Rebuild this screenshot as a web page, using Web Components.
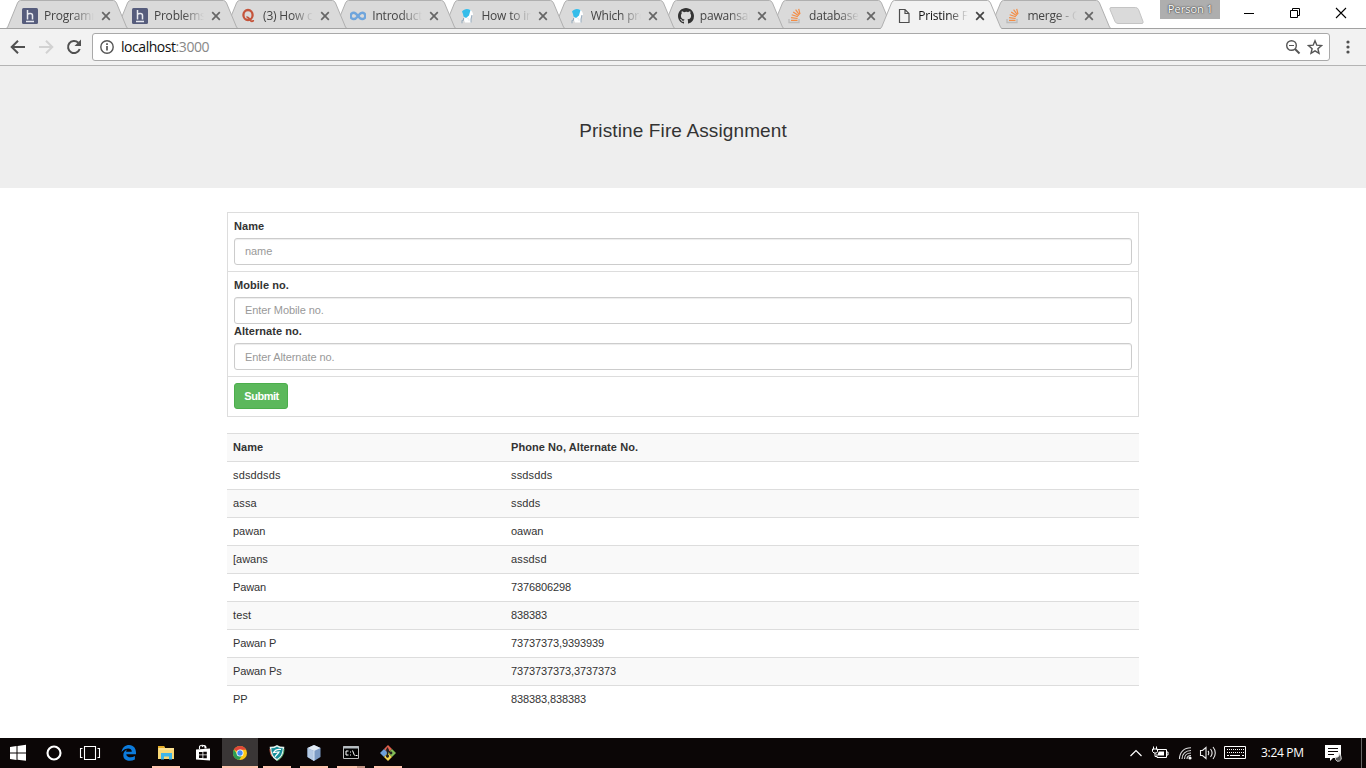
<!DOCTYPE html>
<html lang="en"><head><meta charset="utf-8"><title>Pristine Fire</title>
<style>html,body{margin:0;height:100%;overflow:hidden;background:#fff}</style></head>
<body>
<desktop-screen></desktop-screen>
<script>
const ICONS={
hack:'<svg width="16" height="16"><rect width="16" height="16" rx="1.5" fill="#565c7c"/><path d="M5.500 2v9.500M5.500 6.500c1-1.300 5-1.600 5 1v4M4 13.500h8" fill="none" stroke="#e8e9f0" stroke-width="1.500"/></svg>',
quora:'<svg width="16" height="16"><ellipse cx="7" cy="7" rx="4.600" ry="5" fill="none" stroke="#c5543b" stroke-width="2.300"/><path d="M5.500 9.200c3-1 3.500 4.800 5.500 4.200 1 0 1.300-.7 1.300-1.400" fill="none" stroke="#c5543b" stroke-width="1.800"/></svg>',
inf:'<svg width="16" height="16"><path d="M8 8C6 5.200 4.900 4.700 3.800 4.700a3.100 3.100 0 0 0 0 6.400C5.700 11.100 6.700 9.600 8 8S10.200 4.700 12.200 4.700a3.100 3.100 0 0 1 0 6.400C10.700 11.100 9.700 10.200 8 8" fill="none" stroke="#6fa5dc" stroke-width="2.500"/></svg>',
drop:'<svg width="16" height="16"><path d="M8 1c4 0 6 3 6 6l-2 3v4.500H6L5 12l1-4z" fill="#fff"/><path d="M3 3.500C5 .5 9 .2 11.500 2L10 7.500 7 10 4.500 8.500 4 6z" fill="#35bdea"/><path d="M4.500 10v2.300H3v3M13 7l-1 4v3.500" stroke="#93a9bc" stroke-width="1" fill="none"/><path d="M8 10l2 1v2" stroke="#e6edf2" fill="none"/></svg>',
git:'<svg width="16" height="16" viewBox="0 0 16 16"><path fill="#333" d="M8 0C3.580 0 0 3.580 0 8c0 3.540 2.290 6.530 5.470 7.590.4.070.55-.17.55-.38 0-.19-.01-.82-.01-1.490-2.010.37-2.530-.49-2.690-.94-.09-.23-.48-.94-.82-1.130-.28-.15-.68-.52-.01-.53.63-.01 1.080.58 1.230.82.72 1.210 1.870.87 2.330.66.070-.52.28-.87.51-1.070-1.780-.2-3.640-.89-3.640-3.950 0-.87.31-1.590.82-2.150-.08-.2-.36-1.020.08-2.120 0 0 .67-.21 2.200.82A7.700 7.700 0 0 1 8 3.860c.68 0 1.360.09 2 .27 1.530-1.040 2.200-.82 2.200-.82.44 1.100.16 1.920.08 2.120.51.56.82 1.270.82 2.150 0 3.070-1.870 3.750-3.650 3.950.29.25.54.73.54 1.480 0 1.070-.01 1.930-.01 2.200 0 .21.15.46.55.38A8.010 8.010 0 0 0 16 8c0-4.420-3.580-8-8-8z"/></svg>',
so:'<svg width="16" height="16"><path d="M2 11v3.500h10V11" fill="none" stroke="#bcbbbb" stroke-width="1.300"/><path d="M4 12.300h6.500M4.100 9.700l6.500.8M4.700 6.800l6.200 2M6.200 3.900l5.500 3.800M8.600 1.700l3.800 5.200M11.700.8l1.300 5.300" stroke="#f48d45" stroke-width="1.200"/></svg>',
file:'<svg width="16" height="16"><path d="M3.500 1.500h5.500l4 4v9H3.500zM9 1.500v4h4" fill="none" stroke="#4d4d4d" stroke-width="1.200"/></svg>',
back:'<svg width="18" height="18"><path d="M16 9H3M9 2.700L2.700 9 9 15.300" fill="none" stroke="#505050" stroke-width="2"/></svg>',
fwd:'<svg width="18" height="18"><path d="M2 9h13M9 2.700L15.300 9 9 15.300" fill="none" stroke="#d2d2d2" stroke-width="2"/></svg>',
reload:'<svg width="18" height="18"><path d="M14.700 11A6 6 0 1 1 13.300 4.800" fill="none" stroke="#505050" stroke-width="2"/><path d="M9.500 8H16V1.500z" fill="#505050"/></svg>',
info:'<svg width="16" height="16"><circle cx="8" cy="8" r="6.200" fill="none" stroke="#555" stroke-width="1.400"/><path d="M8 7v4.500M8 4.200v1.700" stroke="#555" stroke-width="1.700"/></svg>',
mag:'<svg width="16" height="16"><circle cx="6.500" cy="6.500" r="4.800" fill="none" stroke="#555" stroke-width="1.400"/><path d="M10 10l4.500 4.500" stroke="#555" stroke-width="2"/><path d="M4 6.500h5" stroke="#555"/></svg>',
star:'<svg width="16" height="16"><path d="M8 1.800l1.800 4.400 4.700.4-3.600 3.100 1.100 4.600L8 11.800l-4 2.500 1.100-4.600-3.600-3.100 4.700-.4z" fill="none" stroke="#555" stroke-width="1.400"/></svg>',
dots:'<svg width="4" height="16"><g fill="#505050"><circle cx="2" cy="3" r="1.600"/><circle cx="2" cy="8" r="1.600"/><circle cx="2" cy="13" r="1.600"/></g></svg>',
min:'<svg width="12" height="12"><path d="M1 6.500h10" stroke="#000"/></svg>',
rest:'<svg width="12" height="12"><path d="M1.500 3.500h7v7h-7zM3.500 3V1.500h7v7H9" fill="none" stroke="#000"/></svg>',
cls:'<svg width="12" height="12"><path d="M1 1l10 10M11 1L1 11" stroke="#000" stroke-width="1.100"/></svg>',
win:'<svg width="18" height="18"><path fill="#fff" d="M1 3l6.500-1v6.500H1zM8.500 1.900L17 .8v7.700H8.500zM1 9.500h6.500V16L1 15zM8.500 9.500H17v7.300l-8.500-1z"/></svg>',
cort:'<svg width="18" height="18"><circle cx="9" cy="9" r="6.500" fill="none" stroke="#fff" stroke-width="2.100"/></svg>',
task:'<svg width="22" height="18"><path d="M5.500 2.500h11v13h-11zM3.500 4.500h-2v9h2M18.500 4.500h2v9h-2" fill="none" stroke="#fff" stroke-width="1.100"/></svg>',
edge:'<svg width="18" height="18"><path fill="#0c7bdc" d="M1.500 8C2.300 3.500 5.300 1 9.200 1c4.500 0 6.800 3.700 6.800 7.700v1.500H6.300c.2 3.500 5.400 3.900 8.600 1.900v3.300C10 18.200 3.300 16.700 3.300 11.200c0-2.800 1.500-4.800 3.800-5.800-.6.700-.9 1.300-1 2.300h5.700C11.800 3.600 5.500 3.300 1.500 8z"/></svg>',
folder:'<svg width="18" height="18"><path d="M1 2h6l1 2h9v11H1z" fill="#f8d775"/><path d="M1 2h6l1 2H1z" fill="#e6ad29"/><path d="M2 5h15" stroke="#ffebae"/><path d="M4 15.500V9h11v6.500h-3V12.500H7v3z" fill="#3fb5e8"/></svg>',
store:'<svg width="18" height="18"><path d="M2 5.500l14-1v12l-14-1z" fill="#fff"/><path d="M5.500 5V3c0-2 5.500-2.500 5.500 0v1.500M8 3c1-2 4-2 4 .5v1" fill="none" stroke="#fff" stroke-width="1.100"/><path d="M5 8h3.500v2.500H5zM9.300 7.700h3.500v2.800H9.300zM5 11.300h3.500V14H5zM9.300 11.300h3.500v3H9.300z" fill="#0a0606"/></svg>',
chrome:'<svg width="18" height="18"><circle cx="9" cy="9" r="7" fill="#fbc716"/><path d="M9 9L2.900 5.500A7 7 0 0 1 15.200 5.700H9z" fill="#df463a"/><path d="M2.900 5.500a7 7 0 0 0 5.300 10.500L11.300 11 9 9 6 10z" fill="#2c9c55"/><circle cx="9" cy="9" r="3.500" fill="#fff"/><circle cx="9" cy="9" r="2.700" fill="#438cf4"/></svg>',
shield:'<svg width="18" height="18"><path d="M2.500 3.500C6 3.500 8 2.500 9 1.800c1 .7 3 1.700 6.500 1.700 0 6.500-2 10-6.500 12.500-4.500-2.500-6.500-6-6.500-12.500z" fill="#168f9a" stroke="#e4f2ee" stroke-width="1.500"/><path d="M16 5c0 5-2 9-7 11.700" stroke="#4aa564" fill="none"/><path d="M2 5c0 3 .7 5.500 2 7.500" stroke="#cc5b46" fill="none"/><path d="M13 5.500C9 5 7 6 5.500 8.500L11 8C10 10 8 11 7 13" fill="none" stroke="#fff" stroke-width="1.200"/></svg>',
cube:'<svg width="18" height="18"><path d="M9 1l6.500 3v9L9 17l-6.500-4V4z" fill="#7c9bc5"/><path d="M9 1l6.500 3L9 7 2.500 4z" fill="#e3ebf5"/><path d="M2.500 4L9 7v10l-6.500-4z" fill="#b4c9e4"/><path d="M9 7v9.500" stroke="#d6e4f4"/></svg>',
cmd:'<svg width="18" height="18"><path d="M1.500 2.500h15v12h-15z" fill="#000" stroke="#bbb"/><path d="M1 3.500h16" stroke="#b5bdc2" stroke-width="2"/><path d="M6.500 7H4v4h2.500M8.500 7.500v1M8.500 10.500v1M10.500 6.500l2 5M13.500 11.500h2" fill="none" stroke="#fff"/></svg>',
gitb:'<svg width="18" height="18"><path d="M9 1l4 4-4 4-4-4z" fill="#e2604d"/><path d="M5 5l4 4-4 4-4-4z" fill="#6ea1dc"/><path d="M13 5l4 4-4 4-4-4z" fill="#83bd56"/><path d="M9 9l4 4-4 4-4-4z" fill="#f4d551"/><path d="M8.500 3.500v10M8.500 6l3 3" stroke="#222" stroke-width="1.300"/><circle cx="8.500" cy="6" r="1.400" fill="#222"/><circle cx="12" cy="9" r="1.400" fill="#222"/><circle cx="8.500" cy="12" r="1.600" fill="#222"/></svg>',
up:'<svg width="14" height="16"><path d="M1.500 11L7 5.500 12.500 11" fill="none" stroke="#fff" stroke-width="1.200"/></svg>',
batt:'<svg width="17" height="16"><path d="M6 4.500h8.500v8H5V9M14.500 7H16v3h-1.500" fill="none" stroke="#fff"/><path d="M7 6.500h5v4H6V8z" fill="#fff"/><path d="M.500 4h5v2.500L4.500 8H2L.500 6.500zM1.500 1.500v3M4.500 1.500v3M3 8v3.500h2" fill="none" stroke="#fff"/></svg>',
wifi:'<svg width="14" height="16"><g fill="none" stroke="#ddd" stroke-width="1.100"><path d="M1.500 14C1.500 7 6 2.800 13 2.800"/><path d="M4 14c0-5 3.500-8.500 9-8.500" /><path d="M6.500 14c0-3.500 2.500-6 6.500-6"/><path d="M9 14c0-2 1.500-3.500 4-3.500"/></g><circle cx="12" cy="13" r="1.600" fill="#fff"/></svg>',
vol:'<svg width="18" height="16"><path d="M1.500 5.500h2L7 2.500v11L3.500 10.500h-2zM9 6c1 1 1 3 0 4M11.500 4c2 2.500 2 5.500 0 8M14 2c3 3.500 3 8.500 0 12" fill="none" stroke="#eee" stroke-width="1.100"/></svg>',
kbd:'<svg width="24" height="16"><path d="M1.500 1.500h21v12h-21z" fill="none" stroke="#fff"/><path d="M4 4.500h17M4 7.500h17" stroke="#fff" stroke-dasharray="1 1"/><path d="M4 10.500h2M7 10.500h10M19 10.500h2" stroke="#fff"/></svg>',
note:'<svg width="18" height="18"><path d="M1 1h16v13H9l-3 3v-3H1z" fill="#fff"/><path d="M4 4.500h10M4 7.500h10M4 10.500h6" stroke="#0c0606"/><path d="M11.500 15.500a3 3 0 0 0 5.500-2.500c0-1.500-1-2.500-2-3.500.8 2-.5 3.800-3.500 4z" fill="#555" stroke="#ddd" stroke-width=".9"/></svg>'
};
const define=(name,tpl)=>customElements.define(name,class extends HTMLElement{
  constructor(){super();this.attachShadow({mode:'open'}).innerHTML=typeof tpl==='function'?tpl(this):tpl;}
});
define('ui-icon',e=>`<style>:host{display:block;flex:none}svg{display:block}</style>${ICONS[e.getAttribute('name')]}`);
define('browser-tab',e=>{const a=e.hasAttribute('active'),c=a?'#f2f2f2':'#dadada';return `<style>
:host{display:grid;grid-template:29px/122.2px;flex:none;margin-right:-13px;font:12px "Open Sans","Noto Sans",sans-serif;color:${a?'#111':'#444'}}
svg,.in{grid-area:1/1}.in{display:flex;align-items:center;padding:2px 0 0 16px;height:27px;z-index:1}
.t{width:51px;margin-left:6px;white-space:nowrap;overflow:hidden;line-height:20px;-webkit-mask:linear-gradient(90deg,#000 29px,transparent 50px);mask:linear-gradient(90deg,#000 29px,transparent 50px);letter-spacing:-.2px}
.x{display:block;margin-left:6px}</style>
<svg width="122.2" height="29"><path d="M0 ${a?29:28}.5L1.500 27.500 11.500 3Q12.500.5 14.500.5H107.500Q109.300.5 110.500 3L120.700 27.500 122.200 ${a?29:28}.5z" fill="${c}"/><path d="M0 28.500L1.500 27.500 11.500 3Q12.500.5 14.500.5H107.500Q109.300.5 110.500 3L120.700 27.500 122.200 28.500" fill="none" stroke="#b0b0b0"/>${a?'':'<path d="M0 28.500H122.200" stroke="#a2a2a2"/>'}</svg>
<div class="in"><ui-icon name="${e.getAttribute('icon')}"></ui-icon><span class="t"><slot></slot></span><svg class="x" width="10" height="10"><path d="M1.200 1.200l7.600 7.600M8.800 1.200L1.200 8.800" stroke="${a?'#444':'#666'}" stroke-width="1.700"/></svg></div>`});
const tabs=[['hack','Programming'],['hack','Problems'],['quora','(3) How can'],['inf','Introduction'],['drop','How to install'],['drop','Which prog'],['git','pawansalaria'],['so','database'],['file','Pristine Fire',1],['so','merge - Git']];
define('tab-strip',`<style>
:host{display:flex;height:29px;background:linear-gradient(#fff 28px,#a2a2a2 28px);padding-left:6px;font:11px "Open Sans",sans-serif}
browser-tab{position:relative}browser-tab:first-of-type{margin-right:-12.300px}.new{flex:none;margin:6px 0 0 10.800px}
.p{width:60px;height:19px;background:#aeaeae;color:#fff;text-align:center;line-height:18px;text-shadow:0 0 2px #333,0 0 1px #333;margin-left:15px;flex:none}
.w{display:flex;gap:34px;padding:7px 0 0 23px}</style>
${tabs.map((t,i)=>`<browser-tab icon="${t[0]}" ${t[2]?'active':''} style="z-index:${t[2]?20:10-i}">${t[1]}</browser-tab>`).join('')}
<svg class="new" width="36" height="19"><path d="M2 1.500h24.500q2 0 3 2l4.500 12q.5 2-1 2H9q-2 0-3-2l-5-12q-.500-2 1-2z" fill="#dadada" stroke="#c4c4c4"/></svg>
<div class="p">Person 1</div><div class="w"><ui-icon name="min"></ui-icon><ui-icon name="rest"></ui-icon><ui-icon name="cls"></ui-icon></div>`);
define('address-bar',`<style>
:host{display:flex;align-items:center;box-sizing:border-box;height:37px;background:#f2f2f2;border-bottom:1px solid #b4b4b4;padding:0 16px 0 9px;font:14px "Open Sans","Noto Sans",sans-serif}
.nav{display:flex;gap:10px;width:83px}.box{display:flex;align-items:center;flex:1;box-sizing:border-box;height:28px;border:1px solid #a9a9a9;border-radius:3px;background:#fff;padding:0 6px}
.u{flex:1;margin-left:6px;color:#111;line-height:24px;letter-spacing:-.45px}.u span{color:#888}.r{display:flex;gap:6px}.m{margin-left:16px}</style>
<div class="nav"><ui-icon name="back"></ui-icon><ui-icon name="fwd"></ui-icon><ui-icon name="reload"></ui-icon></div>
<div class="box"><ui-icon name="info"></ui-icon><div class="u">localhost<span>:3000</span></div><div class="r"><ui-icon name="mag"></ui-icon><ui-icon name="star"></ui-icon></div></div><ui-icon class="m" name="dots"></ui-icon>`);
define('page-banner',`<style>:host{display:flex;align-items:center;justify-content:center;height:122px;background:#eee;font-size:19px;color:#333}span{margin-top:8px;letter-spacing:.12px}</style><span><slot></slot></span>`);
define('form-field',e=>`<style>:host{display:block}label{display:block;font-weight:700;height:20px;line-height:16px;letter-spacing:.05px}
input{display:block;box-sizing:border-box;width:100%;height:27px;border:1px solid #ccc;border-radius:3px;padding:0 10px var(--lift,2px);font:inherit;letter-spacing:-.09px;color:#555;box-shadow:inset 0 1px 1px rgba(0,0,0,.075);background:#fff}input::placeholder{color:#999;opacity:1}</style>
<label><slot></slot></label><input placeholder="${e.getAttribute('hint')}">`);
define('contact-form',`<style>:host{display:block;border:1px solid #ddd;height:203px}
section{padding:6px;box-sizing:border-box;border-bottom:1px solid #ddd}.a{height:59px;padding-top:5px}.b{height:105px;padding-top:5px}.c{border:0;height:39px}
.b form-field+form-field{margin-top:-1px;--lift:0px}
button{display:block;box-sizing:border-box;width:54px;height:26px;background:#5cb85c;border:1px solid #4cae4c;border-radius:3px;color:#fff;font:700 11px "Liberation Sans",Arial,sans-serif;padding:0 0 0 1px;letter-spacing:-.5px}</style>
<section class="a"><form-field hint="name">Name</form-field></section>
<section class="b"><form-field hint="Enter Mobile no.">Mobile no.</form-field><form-field hint="Enter Alternate no.">Alternate no.</form-field></section>
<section class="c"><button>Submit</button></section>`);
const rows=[['Name','Phone No, Alternate No.'],['sdsddsds','ssdsdds'],['assa','ssdds'],['pawan','oawan'],['[awans','assdsd'],['Pawan','7376806298'],['test','838383'],['Pawan P','73737373,9393939'],['Pawan Ps','7373737373,3737373'],['PP','838383,838383']];
define('contact-table',`<style>:host{display:block;margin-top:16px}
.r{display:grid;grid-template-columns:278px 1fr;box-sizing:border-box;height:28px;border-top:1px solid #ddd;line-height:27px}.r span{padding-left:6px}
.r:nth-of-type(odd){background:#f9f9f9}.r:first-of-type{font-weight:700;letter-spacing:.07px}.s{letter-spacing:.14px}.n{letter-spacing:-.11px}</style>
${rows.map(r=>`<div class="r">${r.map(c=>`<span class="${/^\d|^P[aP]/.test(c)?'n':/s/.test(c)&&c[0]!='['?'s':''}">${c}</span>`).join('')}</div>`).join('')}`);
define('web-page',`<style>:host{display:block;flex:1;min-height:0;overflow:hidden;font:11px "Liberation Sans",Arial,sans-serif;color:#333;background:#fff}main{width:912px;margin:24px auto 0}</style>
<page-banner>Pristine Fire Assignment</page-banner><main><contact-form></contact-form><contact-table></contact-table></main>`);
define('task-bar',`<style>
:host{display:flex;height:30px;background:#0b0606;color:#fff;font:12px "Open Sans","Noto Sans",sans-serif}
.l{display:flex;flex:1}.i{display:flex;box-sizing:border-box;justify-content:center;align-items:center;width:36px;height:30px;margin-right:1px}
.i:first-child{margin-right:0}
.u{width:28px;margin:0 5px 0 4px;border-bottom:2px solid #ffc4ae;padding-top:2px}.on{width:36px;margin:0 1px 0 0;background:#3a3636}.mm{border-image:linear-gradient(90deg,#ffc4ae 19px,#c49585 19px) 2}
.s{display:flex;align-items:center;width:237px}.time{letter-spacing:-.3px;line-height:20px;margin-left:13px;white-space:nowrap;width:43px}.end{margin-left:20px}
.bar{width:1px;height:30px;background:#666;margin-left:19px}</style>
<div class="l"><div class="i"><ui-icon name="win"></ui-icon></div><div class="i"><ui-icon name="cort"></ui-icon></div><div class="i" style="margin-right:0;padding-right:2px"><ui-icon name="task"></ui-icon></div><div class="i" style="margin-left:2px"><ui-icon name="edge"></ui-icon></div><div class="i u" style="margin-left:4px"><ui-icon name="folder"></ui-icon></div><div class="i"><ui-icon name="store"></ui-icon></div><div class="i u on"><ui-icon name="chrome"></ui-icon></div><div class="i u"><ui-icon name="shield"></ui-icon></div><div class="i u"><ui-icon name="cube"></ui-icon></div><div class="i u mm"><ui-icon name="cmd"></ui-icon></div><div class="i u"><ui-icon name="gitb"></ui-icon></div></div>
<div class="s"><ui-icon name="up"></ui-icon><ui-icon name="batt" style="margin-left:9px"></ui-icon><ui-icon name="wifi" style="margin-left:9px"></ui-icon><ui-icon name="vol" style="margin-left:7px"></ui-icon><ui-icon name="kbd" style="margin-left:6px"></ui-icon><span class="time" style="margin-left:14px">3:24 PM</span><ui-icon class="end" name="note"></ui-icon><span class="bar"></span></div>`);
define('desktop-screen',`<style>:host{display:flex;flex-direction:column;height:768px;width:1366px;overflow:hidden}</style><tab-strip></tab-strip><address-bar></address-bar><web-page></web-page><task-bar></task-bar>`);
</script></body></html>
